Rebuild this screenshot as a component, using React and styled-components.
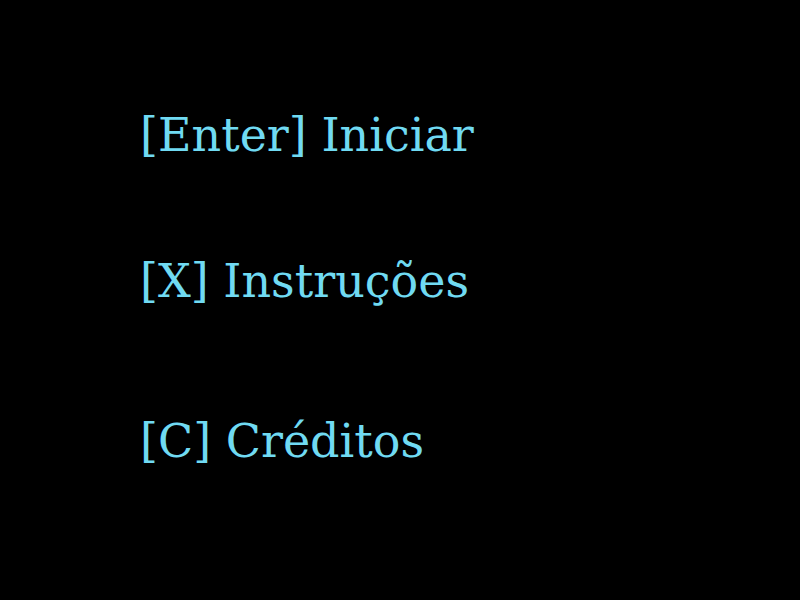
import React from "react";
import styled, { createGlobalStyle } from "styled-components";

const GlobalStyle = createGlobalStyle`
  body {
    margin: 0;
    background: #000000;
  }
`;

const Screen = styled.main`
  box-sizing: border-box;
  min-height: 100vh;
  padding: 105px 140px;
  background: #000000;
`;

const Menu = styled.nav`
  display: flex;
  flex-direction: column;
  align-items: flex-start;
`;

const MenuItem = styled.button`
  margin: ${({ $gap }) => $gap || 0}px 0 0;
  padding: 0;
  border: 0;
  background: none;
  color: #70daf2;
  font-family: "DejaVu Serif", serif;
  font-size: 46px;
  line-height: 60px;
  text-align: left;
  cursor: pointer;
`;

const items = [
  { key: "Enter", label: "Iniciar" },
  { key: "X", label: "Instruções", gap: 86 },
  { key: "C", label: "Créditos", gap: 100 },
];

export default function App() {
  return (
    <Screen>
      <GlobalStyle />
      <Menu>
        {items.map(({ key, label, gap }) => (
          <MenuItem key={key} type="button" $gap={gap}>
            {`[${key}] ${label}`}
          </MenuItem>
        ))}
      </Menu>
    </Screen>
  );
}
